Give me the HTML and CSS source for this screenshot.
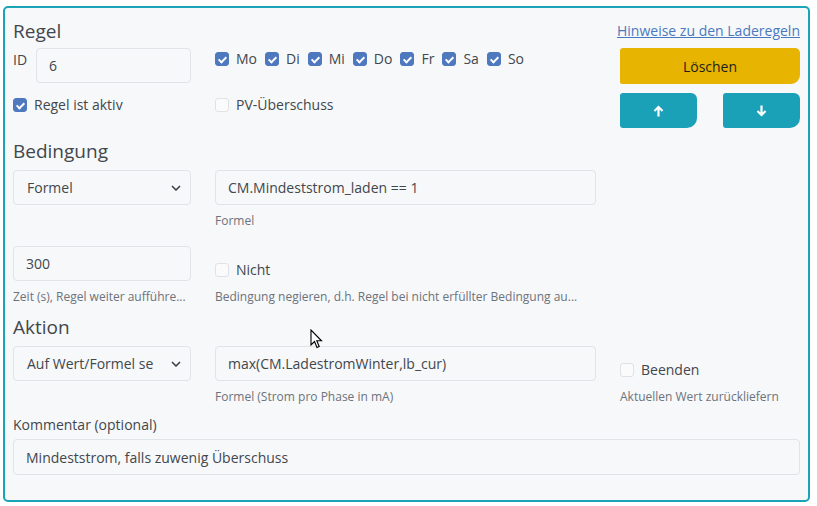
FILE: index.html
```html
<!DOCTYPE html>
<html lang="de">
<head>
<meta charset="utf-8">
<title>Regel</title>
<link rel="stylesheet" href="styles.css">
</head>
<body>
<div class="panel">
  <div class="row row-a">
    <h2 class="heading span2">Regel</h2>
    <div class="hint-cell"><a class="hint" href="#">Hinweise zu den Laderegeln</a></div>
  </div>
  <div class="row row-b">
    <div class="id-cell">
      <span class="id-label">ID</span>
      <div class="input id-input">6</div>
    </div>
    <div class="days">
      <label class="check"><span class="box on"></span>Mo</label>
      <label class="check"><span class="box on"></span>Di</label>
      <label class="check"><span class="box on"></span>Mi</label>
      <label class="check"><span class="box on"></span>Do</label>
      <label class="check"><span class="box on"></span>Fr</label>
      <label class="check"><span class="box on"></span>Sa</label>
      <label class="check"><span class="box on"></span>So</label>
    </div>
    <button class="btn btn-warn">Löschen</button>
  </div>
  <div class="row row-c">
    <label class="check top"><span class="box on"></span>Regel ist aktiv</label>
    <label class="check top"><span class="box"></span>PV-Überschuss</label>
    <div class="arrows">
      <button class="btn btn-info"><svg width="11" height="12" viewBox="0 0 11 12"><path d="M5.5 0.5 L10.3 5.3 L8.8 6.8 L6.6 4.6 V11.5 H4.4 V4.6 L2.2 6.8 L0.7 5.3 Z" fill="#fff"/></svg></button>
      <button class="btn btn-info"><svg width="11" height="12" viewBox="0 0 11 12"><path d="M5.5 11.5 L10.3 6.7 L8.8 5.2 L6.6 7.4 V0.5 H4.4 V7.4 L2.2 5.2 L0.7 6.7 Z" fill="#fff"/></svg></button>
    </div>
  </div>

  <h2 class="heading sec">Bedingung</h2>
  <div class="row row-d">
    <div class="select">Formel<svg class="chev" width="10" height="6" viewBox="0 0 10 6"><path d="M1 1 L5 5 L9 1" fill="none" stroke="#343a40" stroke-width="1.5"/></svg></div>
    <div class="cell">
      <div class="input">CM.Mindeststrom_laden == 1</div>
      <div class="help">Formel</div>
    </div>
  </div>
  <div class="row row-e">
    <div class="cell">
      <div class="input">300</div>
      <div class="help">Zeit (s), Regel weiter aufführe...</div>
    </div>
    <div class="cell">
      <label class="check big"><span class="box"></span>Nicht</label>
      <div class="help">Bedingung negieren, d.h. Regel bei nicht erfüllter Bedingung au...</div>
    </div>
  </div>

  <h2 class="heading sec2">Aktion</h2>
  <div class="row row-f">
    <div class="select start">Auf Wert/Formel se<svg class="chev" width="10" height="6" viewBox="0 0 10 6"><path d="M1 1 L5 5 L9 1" fill="none" stroke="#343a40" stroke-width="1.5"/></svg></div>
    <div class="cell">
      <div class="input">max(CM.LadestromWinter,lb_cur)</div>
      <div class="help">Formel (Strom pro Phase in mA)</div>
    </div>
    <div class="cell">
      <label class="check big"><span class="box"></span>Beenden</label>
      <div class="help">Aktuellen Wert zurückliefern</div>
    </div>
  </div>

  <div class="comment-label">Kommentar (optional)</div>
  <div class="input wide">Mindeststrom, falls zuwenig Überschuss</div>
</div>
<svg class="cursor" width="13" height="20" viewBox="0 0 13 20"><path d="M1 1 V16 L4.5 12.5 L7 18.5 L9.2 17.5 L6.8 11.8 H11.5 Z" fill="#fff" stroke="#000" stroke-width="1.1" stroke-linejoin="miter"/></svg>
</body>
</html>
```
FILE: styles.css
```css
* { box-sizing: border-box; }
html, body { margin: 0; padding: 0; background: #fff; }
body {
  font-family: "Open Sans", "Noto Sans", sans-serif;
  font-size: 14px;
  color: #42474c;
  position: relative;
  width: 817px;
  height: 506px;
  overflow: hidden;
}
.panel {
  margin: 6px 0 0 3px;
  width: 807px;
  border: 2px solid #1ba3b7;
  border-radius: 5px;
  background: #f7f8fa;
  padding: 12px 8px 25px 8px;
}
.row {
  display: grid;
  grid-template-columns: 178px 381px 180px;
  column-gap: 24px;
}
.heading {
  margin: 0;
  font-size: 19px;
  font-weight: 400;
  line-height: 22px;
  color: #42474c;
}
.span2 { grid-column: 1 / 3; }
.hint-cell {
  display: flex;
  justify-content: flex-end;
  align-items: center;
  min-width: 0;
}
.hint {
  flex: none;
  white-space: nowrap;
  color: #4a78bf;
  text-decoration: underline;
  font-size: 14px;
  line-height: 20px;
}
.row-b { margin-top: 6px; align-items: start; }
.id-cell { display: flex; align-items: flex-start; gap: 10px; }
.id-label { line-height: 24px; width: 13px; }
.id-input { flex: 1; height: 36px; }
.input {
  height: 35px;
  border: 1px solid #e0e3e7;
  border-radius: 4px;
  background: #f7f8fa;
  padding: 0 12px;
  display: flex;
  align-items: center;
  color: #42474c;
  white-space: nowrap;
  overflow: hidden;
}
.days { display: flex; gap: 8px; line-height: 24px; }
.check { display: inline-flex; align-items: center; gap: 7px; line-height: 22px; white-space: nowrap; }
.box {
  width: 14px; height: 14px;
  border: 1px solid #dfe2e6;
  border-radius: 3px;
  background: #fbfbfc;
  flex: none;
  position: relative;
}
.box.on { background: #4f79bf; border-color: #4f79bf; }
.box.on::after {
  content: "";
  position: absolute;
  left: 4px; top: 2px;
  width: 3px; height: 6px;
  border: solid #fff;
  border-width: 0 2px 2px 0;
  transform: rotate(45deg);
}
.btn {
  border: none;
  font-family: inherit;
  font-size: 14px;
  display: flex;
  align-items: center;
  justify-content: center;
  padding: 0;
}
.btn-warn {
  height: 36px;
  background: #e6b401;
  color: #1d1d1d;
  border-radius: 3px 5px 9px 2px;
}
.row-c { margin-top: 9px; align-items: start; }
.top { margin-top: 1px; }
.arrows { display: flex; justify-content: space-between; }
.btn-info {
  width: 77px; height: 35px;
  background: #1aa1b8;
  border-radius: 3px 6px 10px 3px;
}
.sec { margin-top: 12px; }
.row-d { margin-top: 8px; align-items: start; }
.select {
  height: 35px;
  border: 1px solid #e0e3e7;
  border-radius: 4px;
  background: #f7f8fa;
  padding: 0 9px 0 13px;
  display: flex;
  align-items: center;
  justify-content: space-between;
}
.select.start { align-self: start; }
.chev { flex: none; }
.cell { display: flex; flex-direction: column; }
.help {
  margin-top: 8px;
  font-size: 12px;
  line-height: 16px;
  color: #6c737a;
  white-space: nowrap;
}
.row-e { margin-top: 17px; align-items: end; }
.sec2 { margin-top: 11px; }
.row-f { margin-top: 8px; align-items: end; }
.comment-label { margin-top: 10px; line-height: 20px; }
.wide { margin-top: 4px; height: 36px; }
.cursor { position: absolute; left: 310px; top: 329px; }
```
